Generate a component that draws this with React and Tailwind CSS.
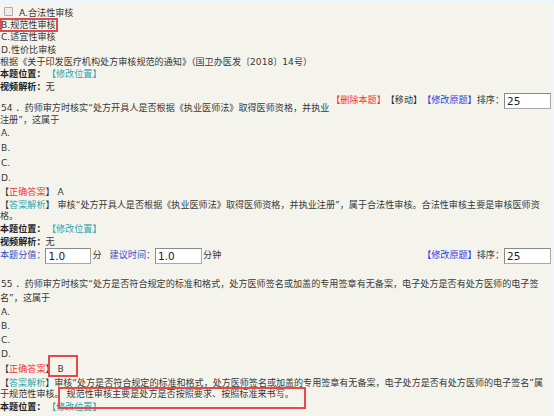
export default function App() {
  const L = "whitespace-nowrap";
  const teal = "text-[#2ea6b0]";
  const Pos = () => (
    <>
      <span className="font-bold text-[#222]">本题位置：</span>
      <span className={`ml-[6px] ${teal}`}>【修改位置】</span>
    </>
  );
  const Input = ({ w, v }) => (
    <input
      readOnly
      value={v}
      className="h-[16px] bg-white border border-[#a8a8a8] border-t-[#8a8a8a] border-l-[#8a8a8a] px-[2px] text-[10.5px] text-[#222] outline-none font-['DejaVu_Sans',sans-serif]"
      style={{ width: w }}
    />
  );
  const Actions = ({ full }) => (
    <div className="ml-auto flex items-center h-[16px]">
      {full && <span className="text-[#f03434]">【删除本题】</span>}
      {full && <span className="text-[#333]">【移动】</span>}
      <span className="text-[#2b3de0]">【修改原题】</span>
      <span>排序：</span>
      <Input w={47} v="25" />
    </div>
  );
  return (
    <div className="relative w-[554px] h-[416px] overflow-hidden bg-[#edf5fc] font-['DejaVu_Sans','Noto_Sans_CJK_SC',sans-serif] text-[9.1px] text-[#383838]">
      <div className="h-[4px]" />
      <div className="flex h-[412px]">
        <div className="w-[551px] bg-[#f5f4ec] pt-[3px] flex flex-col">
          <div className={`${L} h-[12px] leading-[12px] flex items-start`}>
            <span className="mt-[0px] ml-[4px] mr-[6px] w-[9px] h-[9px] border border-[#ababab] bg-[#ececec] rounded-[1px]" />
            <span>A.合法性审核</span>
          </div>
          <div className={`${L} h-[12px] leading-[12px] pl-[1px]`}>B.规范性审核</div>
          <div className={`${L} h-[13px] leading-[13px] pl-[1px]`}>C.适宜性审核</div>
          <div className={`${L} h-[12px] leading-[12px] pl-[1px]`}>D.性价比审核</div>
          <div className={`${L} h-[12px] leading-[12px]`}>根据《关于印发医疗机构处方审核规范的通知》（国卫办医发〔2018〕14号）</div>
          <div className={`${L} h-[13px] leading-[13px]`}><Pos /></div>
          <div className={`${L} h-[12px] leading-[12px]`}>
            <span className="font-bold text-[#222]">视频解析：</span>无
          </div>
          <div className={`${L} h-[21px] flex items-start`}>
            <div className="pt-[9px] leading-[12px] pl-[1px]">54 ．药师审方时核实“处方开具人是否根据《执业医师法》取得医师资格，并执业</div>
            <Actions full />
          </div>
          <div className={`${L} h-[12px] leading-[12px]`}>注册”，这属于</div>
          <div className={`${L} h-[14px] leading-[14px] pl-[1px]`}>A.</div>
          <div className={`${L} h-[16px] leading-[16px] pl-[1px]`}>B.</div>
          <div className={`${L} h-[15px] leading-[15px] pl-[1px]`}>C.</div>
          <div className={`${L} h-[14px] leading-[14px] pl-[1px]`}>D.</div>
          <div className={`${L} h-[14px] leading-[14px]`}>
            【<span className="text-[#f03434]">正确答案</span>】 A
          </div>
          <div className={`${L} h-[12px] leading-[12px]`}>
            【<span className={teal}>答案解析</span>】 审核“处方开具人是否根据《执业医师法》取得医师资格，并执业注册”，属于合法性审核。合法性审核主要是审核医师资
          </div>
          <div className={`${L} h-[11px] leading-[11px]`}>格。</div>
          <div className={`${L} h-[14px] leading-[14px]`}><Pos /></div>
          <div className={`${L} h-[12px] leading-[12px]`}>
            <span className="font-bold text-[#222]">视频解析：</span>无
          </div>
          <div className={`${L} h-[16px] flex items-center`}>
            <span className="text-[#3150c8]">本题分值：</span>
            <Input w={46} v="1.0" />
            <span className="ml-[1px]">分</span>
            <span className="ml-[8px] text-[#3150c8]">建议时间：</span>
            <Input w={47} v="1.0" />
            <span className="ml-[1px]">分钟</span>
            <Actions />
          </div>
          <div className="h-[13px]" />
          <div className={`${L} h-[14px] leading-[14px] pl-[1px]`}>55 ．药师审方时核实“处方是否符合规定的标准和格式，处方医师签名或加盖的专用签章有无备案，电子处方是否有处方医师的电子签</div>
          <div className={`${L} h-[14px] leading-[14px]`}>名”，这属于</div>
          <div className={`${L} h-[14px] leading-[14px] pl-[1px]`}>A.</div>
          <div className={`${L} h-[14px] leading-[14px] pl-[1px]`}>B.</div>
          <div className={`${L} h-[14px] leading-[14px] pl-[1px]`}>C.</div>
          <div className={`${L} h-[15px] leading-[15px] pl-[1px]`}>D.</div>
          <div className={`${L} h-[15px] leading-[15px]`}>
            【<span className="text-[#f03434]">正确答案</span>】 B
          </div>
          <div className={`${L} h-[12px] leading-[12px] tracking-[-0.05px]`}>
            【<span className={teal}>答案解析</span>】审核“处方是否符合规定的标准和格式，处方医师签名或加盖的专用签章有无备案，电子处方是否有处方医师的电子签名”属
          </div>
          <div className={`${L} h-[11px] leading-[11px]`}>于规范性审核。 规范性审核主要是处方是否按照要求、按照标准来书写。</div>
          <div className={`${L} h-[14px] leading-[14px]`}><Pos /></div>
        </div>
        <div className="flex-1 bg-[#f2f6f8]" />
      </div>
      <div className="absolute left-[0px] top-[18px] w-[58px] h-[14px] border-2 border-[#e5484d]" />
      <div className="absolute left-[48px] top-[355px] w-[30px] h-[22px] border-2 border-[#e5484d]" />
      <div className="absolute left-[58px] top-[387px] w-[248px] h-[22px] border-2 border-[#e5484d]" />
    </div>
  );
}
